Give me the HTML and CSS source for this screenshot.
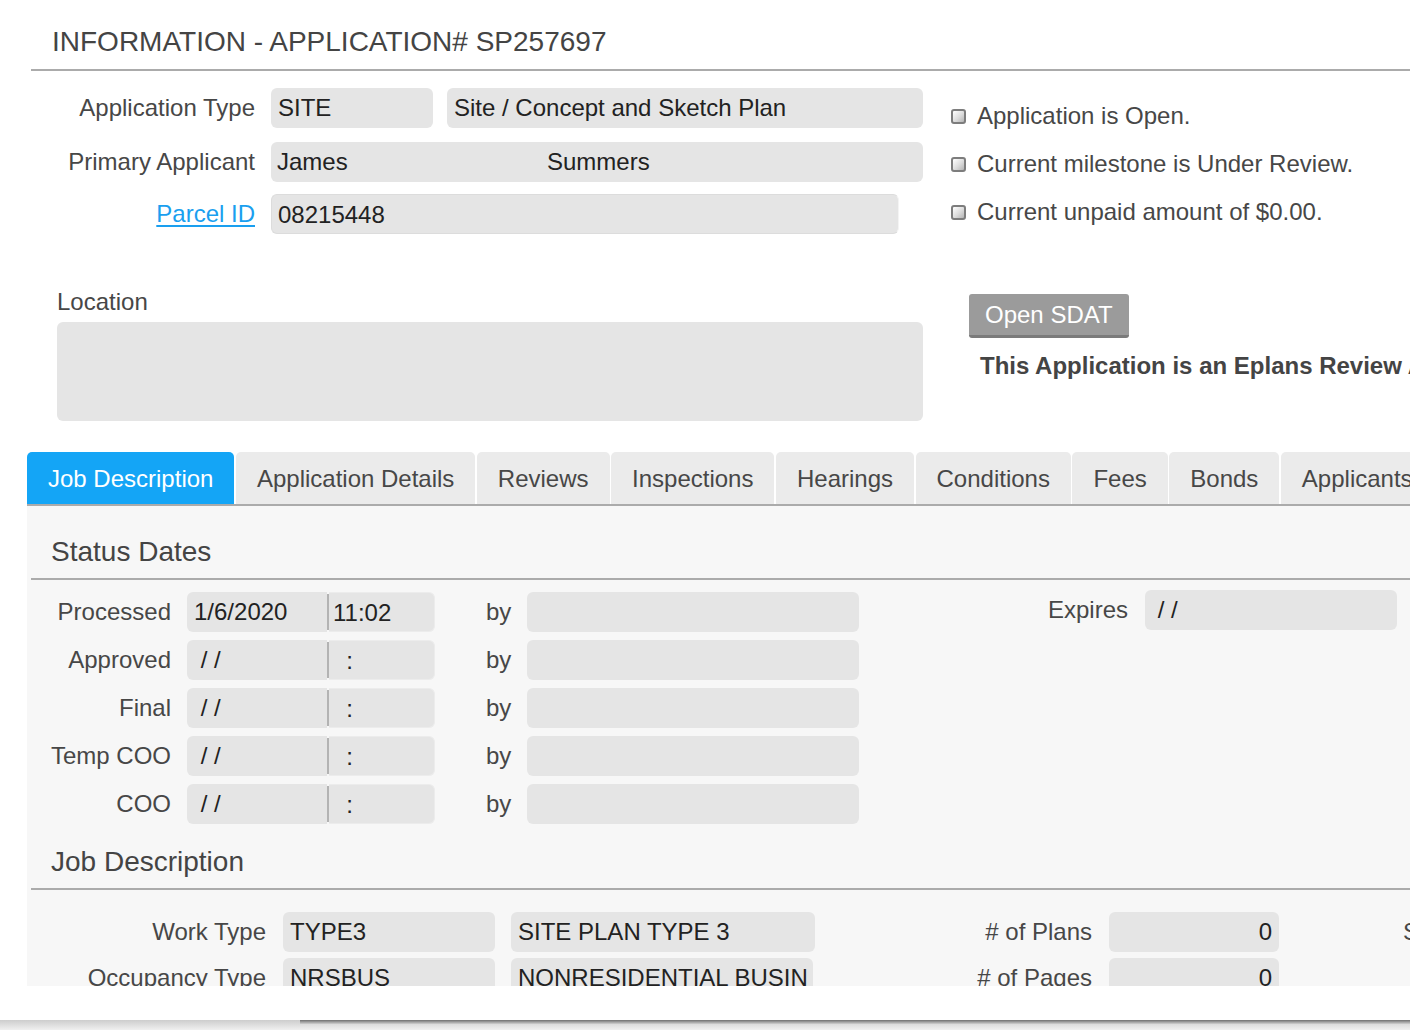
FILE: index.html
```html
<!DOCTYPE html>
<html lang="en">
<head>
<meta charset="utf-8">
<title>Information - Application# SP257697</title>
<link rel="stylesheet" href="styles.css">
</head>
<body>
<div class="page">
  <div class="viewport">
    <div class="title-bar"><h1 class="title">INFORMATION - APPLICATION# SP257697</h1></div>

    <div class="top">
      <div class="fields">
        <div class="frow">
          <span class="flabel">Application Type</span>
          <div class="inp w162">SITE</div>
          <div class="inp w476 ml14">Site / Concept and Sketch Plan</div>
        </div>
        <div class="frow r2">
          <span class="flabel">Primary Applicant</span>
          <div class="inp w652 split"><span class="first-name">James</span><span>Summers</span></div>
        </div>
        <div class="frow r3">
          <a class="flabel link" href="#">Parcel ID</a>
          <div class="inp w628 bordered">08215448</div>
        </div>
      </div>
      <ul class="status">
        <li><span class="chk"></span>Application is Open.</li>
        <li><span class="chk"></span>Current milestone is Under Review.</li>
        <li><span class="chk"></span>Current unpaid amount of $0.00.</li>
      </ul>
    </div>

    <div class="loc">
      <div class="loc-left">
        <div class="loc-label">Location</div>
        <div class="loc-box"></div>
      </div>
      <div class="loc-right">
        <button class="btn">Open SDAT</button>
        <div class="eplans">This Application is an Eplans Review Application</div>
      </div>
    </div>

    <div class="tabs">
      <div class="tab active">Job Description</div>
      <div class="tab">Application Details</div>
      <div class="tab">Reviews</div>
      <div class="tab">Inspections</div>
      <div class="tab">Hearings</div>
      <div class="tab">Conditions</div>
      <div class="tab">Fees</div>
      <div class="tab">Bonds</div>
      <div class="tab">Applicants</div>
    </div>

    <div class="panel">
      <h2 class="section-head">Status Dates</h2>
      <div class="dates">
        <div class="date-rows">
          <div class="drow">
            <span class="dlabel">Processed</span>
            <div class="dt"><div class="d">1/6/2020</div><div class="sep"></div><div class="t">11:02</div></div>
            <span class="by">by</span>
            <div class="inp w332"></div>
          </div>
          <div class="drow">
            <span class="dlabel">Approved</span>
            <div class="dt"><div class="d">&nbsp;/ /</div><div class="sep"></div><div class="t">&nbsp;&nbsp;:</div></div>
            <span class="by">by</span>
            <div class="inp w332"></div>
          </div>
          <div class="drow">
            <span class="dlabel">Final</span>
            <div class="dt"><div class="d">&nbsp;/ /</div><div class="sep"></div><div class="t">&nbsp;&nbsp;:</div></div>
            <span class="by">by</span>
            <div class="inp w332"></div>
          </div>
          <div class="drow">
            <span class="dlabel">Temp COO</span>
            <div class="dt"><div class="d">&nbsp;/ /</div><div class="sep"></div><div class="t">&nbsp;&nbsp;:</div></div>
            <span class="by">by</span>
            <div class="inp w332"></div>
          </div>
          <div class="drow">
            <span class="dlabel">COO</span>
            <div class="dt"><div class="d">&nbsp;/ /</div><div class="sep"></div><div class="t">&nbsp;&nbsp;:</div></div>
            <span class="by">by</span>
            <div class="inp w332"></div>
          </div>
        </div>
        <div class="expires">
          <span class="elabel">Expires</span>
          <div class="inp w252">&nbsp;/ /</div>
        </div>
      </div>

      <h2 class="section-head second">Job Description</h2>
      <div class="job">
        <div class="jrow">
          <span class="jlabel">Work Type</span>
          <div class="inp w212">TYPE3</div>
          <div class="inp w304 ml16">SITE PLAN TYPE 3</div>
          <span class="nlabel">#&nbsp;of Plans</span>
          <div class="inp w170 num">0</div>
          <span class="xlabel">Stories</span>
        </div>
        <div class="jrow r2j">
          <span class="jlabel">Occupancy Type</span>
          <div class="inp w212">NRSBUS</div>
          <div class="inp w302 ml16">NONRESIDENTIAL BUSIN</div>
          <span class="nlabel n2">#&nbsp;of Pages</span>
          <div class="inp w170 num">0</div>
        </div>
      </div>
    </div>
  </div>
  <div class="blank"></div>
  <div class="shade"><div class="shade-edge"></div></div>
</div>
</body>
</html>
```

FILE: styles.css
```css
html, body {
  margin: 0;
  padding: 0;
  overflow: hidden;
  background: #ffffff;
}

body {
  font-family: "Liberation Sans", Arial, Helvetica, sans-serif;
  font-size: 24px;
  color: #474747;
}

.page {
  width: 1600px;
}

.viewport {
  height: 986px;
  overflow: hidden;
}

/* Title */
.title-bar {
  margin-left: 31px;
  padding: 26px 0 11px 21px;
  border-bottom: 2px solid #ababab;
}

.title {
  margin: 0;
  font-size: 28px;
  line-height: 32px;
  font-weight: normal;
  color: #444444;
}

/* Generic input look */
.inp {
  box-sizing: border-box;
  height: 40px;
  line-height: 40px;
  padding: 0 7px;
  background: #e5e5e5;
  border-radius: 6px;
  color: #222222;
  white-space: nowrap;
  overflow: hidden;
  flex: none;
}

.w162 { width: 162px; }
.w476 { width: 476px; }
.w652 { width: 652px; }
.w628 { width: 628px; }
.w332 { width: 332px; }
.w252 { width: 252px; }
.w212 { width: 212px; }
.w304 { width: 304px; }
.w302 { width: 302px; }
.w170 { width: 170px; }
.ml14 { margin-left: 14px; }
.ml16 { margin-left: 16px; }

/* Top area */
.top {
  display: flex;
  align-items: flex-start;
  padding-top: 17px;
}

.fields {
  width: 923px;
  flex: none;
}

.frow {
  display: flex;
  align-items: center;
  height: 40px;
}

.frow.r2 { margin-top: 14px; }
.frow.r3 { margin-top: 12px; }

.flabel {
  width: 255px;
  margin-right: 16px;
  text-align: right;
  flex: none;
  white-space: nowrap;
}

.link {
  color: #1a9fef;
  text-decoration: underline;
  text-decoration-thickness: 2px;
  text-underline-offset: 3px;
}

.split {
  display: flex;
  padding: 0;
}

.split span {
  padding-left: 6px;
}

.split .first-name {
  width: 264px;
  flex: none;
}

.bordered {
  border: 1px solid #dcdcdc;
  border-right-color: #f4f4f4;
  padding-left: 6px;
}

.status {
  list-style: none;
  margin: 0 0 0 28px;
  padding: 4px 0 0 0;
  white-space: nowrap;
}

.status li {
  display: flex;
  align-items: center;
  height: 48px;
  line-height: 48px;
}

.chk {
  box-sizing: border-box;
  width: 15px;
  height: 15px;
  margin-right: 11px;
  border: 2px solid #7d7d7d;
  border-radius: 3px;
  background: linear-gradient(135deg, #ffffff 0%, #dcdcdc 55%, #b4b4b4 100%);
  flex: none;
}

/* Location */
.loc {
  display: flex;
  align-items: flex-start;
  margin-top: 52px;
}

.loc-left {
  margin-left: 57px;
  width: 866px;
  flex: none;
}

.loc-label {
  line-height: 28px;
  height: 28px;
}

.loc-box {
  margin-top: 6px;
  height: 99px;
  background: #e5e5e5;
  border-radius: 6px;
}

.loc-right {
  margin-left: 46px;
  padding-top: 6px;
}

.btn {
  box-sizing: border-box;
  height: 44px;
  padding: 0 16px;
  border: none;
  border-bottom: 3px solid #7b7b7b;
  border-radius: 3px;
  background: #9b9b9b;
  color: #ffffff;
  font-family: inherit;
  font-size: 24px;
  line-height: 41px;
}

.eplans {
  margin-top: 14px;
  margin-left: 11px;
  line-height: 28px;
  font-weight: bold;
  color: #444444;
  white-space: nowrap;
}

/* Tabs */
.tabs {
  display: flex;
  gap: 1.5px;
  margin-top: 31px;
  margin-left: 27px;
  height: 52px;
}

.tab {
  padding: 0 21px;
  line-height: 54px;
  background: #ebebeb;
  border-radius: 5px 5px 0 0;
  color: #474747;
  white-space: nowrap;
}

.tab.active {
  background: #14a5f6;
  color: #ffffff;
}

/* Panel */
.panel {
  margin-left: 27px;
  border-top: 2px solid #ababab;
  background: #f7f7f7;
  padding-top: 30px;
  height: 1000px;
}

.section-head {
  margin: 0 0 0 4px;
  padding: 0 0 10px 20px;
  font-size: 28px;
  line-height: 32px;
  font-weight: normal;
  color: #444444;
  border-bottom: 2px solid #ababab;
}

.section-head.second {
  margin-top: 22px;
}

.dates {
  display: flex;
  align-items: flex-start;
  margin-top: 12px;
}

.date-rows {
  display: flex;
  flex-direction: column;
  gap: 8px;
}

.drow {
  display: flex;
  align-items: center;
  height: 40px;
}

.dlabel {
  width: 144px;
  margin-right: 16px;
  text-align: right;
  flex: none;
  white-space: nowrap;
}

.dt {
  display: flex;
  width: 248px;
  height: 40px;
  flex: none;
}

.dt .d,
.dt .t {
  box-sizing: border-box;
  height: 40px;
  line-height: 40px;
  background: #e5e5e5;
  color: #222222;
  white-space: nowrap;
}

.dt .d {
  width: 140px;
  padding-left: 7px;
  border-radius: 6px 0 0 6px;
}

.dt .sep {
  width: 2px;
  background: #b3b3b3;
  margin: 2px 0;
}

.dt .t {
  width: 106px;
  padding-left: 4px;
  border-radius: 0 6px 6px 0;
  border: 1px solid #ececec;
  border-left: none;
}

.by {
  margin-left: 51px;
  margin-right: 16px;
  width: 25px;
  flex: none;
}

.expires {
  display: flex;
  align-items: center;
  margin-left: 189px;
  margin-top: -2px;
}

.elabel {
  margin-right: 17px;
}

.inp.w252 {
  padding-left: 6px;
}

/* Job description rows */
.job {
  margin-top: 22px;
}

.jrow {
  display: flex;
  align-items: center;
  height: 40px;
}

.jrow.r2j {
  margin-top: 6px;
}

.jlabel {
  width: 239px;
  margin-right: 17px;
  text-align: right;
  flex: none;
  white-space: nowrap;
}

.nlabel {
  width: 277px;
  margin-right: 17px;
  text-align: right;
  flex: none;
  white-space: nowrap;
}

.nlabel.n2 {
  width: 279px;
}

.num {
  text-align: right;
}

.xlabel {
  margin-left: 124px;
  white-space: nowrap;
}

/* Bottom shade */
.blank {
  height: 34px;
}

.shade {
  height: 10px;
  background: linear-gradient(#cdcdcd, #f0f0f0);
}

.shade-edge {
  margin-left: 300px;
  height: 4px;
  background: linear-gradient(#6f6f6f, #cfcfcf);
}
```
